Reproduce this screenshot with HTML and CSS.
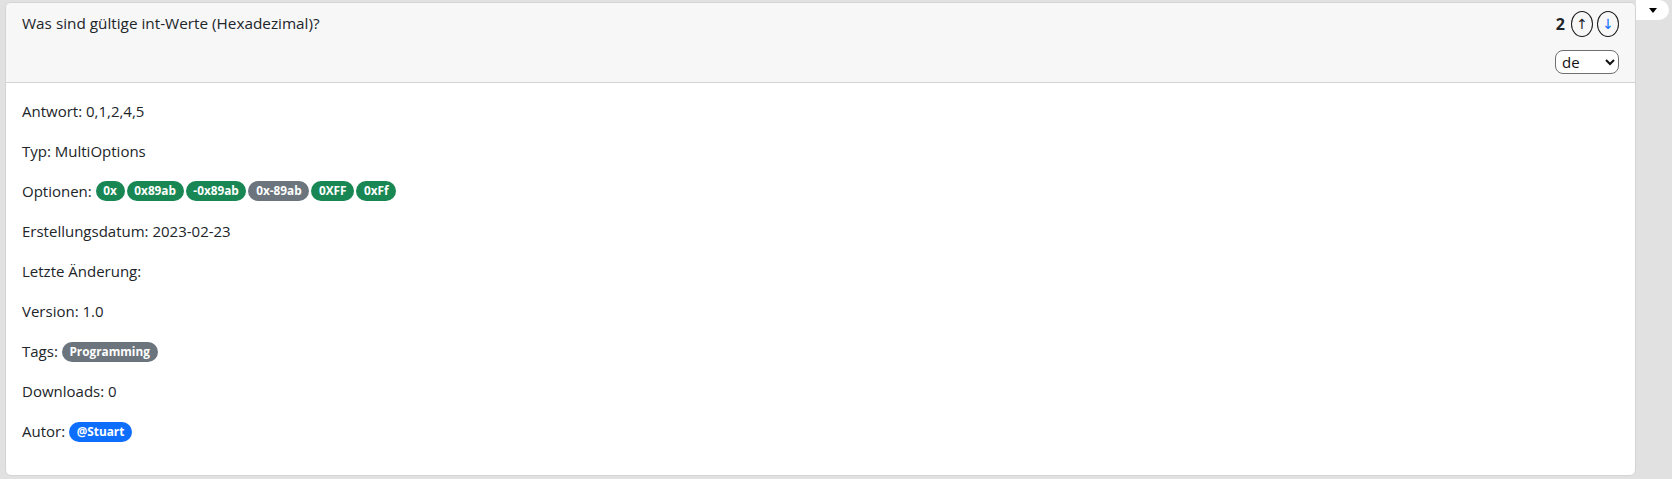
FILE: index.html
```html
<!DOCTYPE html>
<html lang="de">
<head>
<meta charset="utf-8">
<title>Frage</title>
<link rel="stylesheet" href="styles.css">
</head>
<body>
<div class="page">
  <div class="card">
    <div class="card-header">
      <div class="title">Was sind gültige int-Werte (Hexadezimal)?</div>
      <div class="controls">
        <div class="vote">
          <span class="count">2</span>
          <button class="arrow up" type="button">↑</button>
          <button class="arrow down" type="button">↓</button>
        </div>
        <select class="lang"><option>de</option></select>
      </div>
    </div>
    <div class="card-body">
      <p>Antwort: 0,1,2,4,5</p>
      <p>Typ: MultiOptions</p>
      <p>Optionen: <span class="badges"><span class="badge green">0x</span><span class="badge green">0x89ab</span><span class="badge green">-0x89ab</span><span class="badge gray">0x-89ab</span><span class="badge green">0XFF</span><span class="badge green">0xFf</span></span></p>
      <p>Erstellungsdatum: 2023-02-23</p>
      <p>Letzte Änderung:</p>
      <p>Version: 1.0</p>
      <p>Tags: <span class="badge gray">Programming</span></p>
      <p>Downloads: 0</p>
      <p>Autor: <span class="badge blue">@Stuart</span></p>
    </div>
  </div>
  <div class="tab"><span class="caret"></span></div>
</div>
</body>
</html>
```

FILE: styles.css
```css
html, body {
  margin: 0;
  padding: 0;
  height: 100%;
  overflow: hidden;
  background: #e1e1e1;
}
body {
  font-family: "Open Sans", "Noto Sans", sans-serif;
  font-size: 15px;
  line-height: 24px;
  color: #212529;
}
.page {
  position: relative;
  padding: 2px 36px 0 5px;
}
.card {
  background: #fff;
  border: 1px solid #d4d4d4;
  border-radius: 6px;
  overflow: hidden;
}
.card-header {
  display: flex;
  justify-content: space-between;
  align-items: flex-start;
  background: #f7f7f7;
  border-bottom: 1px solid #d3d3d3;
  padding: 8px 16px 8px 16px;
}
.title {
  font-size: 15.3px;
}
.controls {
  display: flex;
  flex-direction: column;
  align-items: flex-end;
  gap: 13px;
}
.vote {
  display: flex;
  align-items: center;
  gap: 4px;
}
.count {
  font-weight: 700;
  font-size: 16px;
  margin-right: 2px;
}
.arrow {
  width: 22px;
  height: 26px;
  padding: 0;
  border: 1px solid #1a1a1a;
  border-radius: 11px / 13px;
  background: transparent;
  font-family: "DejaVu Sans", sans-serif;
  font-size: 14px;
  line-height: 22px;
  cursor: pointer;
}
.arrow.up { color: #212529; }
.arrow.down { color: #0d6efd; }
.lang {
  width: 64px;
  height: 24px;
  border: 1px solid #6f6f6f;
  border-radius: 8px;
  background: #fff;
  font-family: "Open Sans", sans-serif;
  font-size: 15px;
  color: #111;
  padding: 0 2px;
}
.card-body {
  padding: 16px 16px 16px;
}
.card-body p {
  margin: 0 0 16px;
}
.badges {
  display: inline-flex;
  gap: 2px;
  vertical-align: top;
  padding-top: 2px;
}
.badge {
  display: inline-block;
  font-size: 11.8px;
  font-weight: 700;
  line-height: 1;
  color: #fff;
  padding: 4.3px 7.7px;
  border-radius: 10px;
  vertical-align: 1px;
}
.badges .badge { vertical-align: baseline; }
.green { background: #198754; }
.gray { background: #6c757d; }
.blue { background: #0d6efd; }
.tab {
  position: absolute;
  top: 0;
  left: 1636px;
  width: 33px;
  height: 20px;
  background: #fff;
  border-radius: 0 10px 10px 0;
  display: flex;
  align-items: center;
  justify-content: center;
}
.caret {
  width: 0;
  height: 0;
  border-left: 4px solid transparent;
  border-right: 4px solid transparent;
  border-top: 5px solid #000;
}
```
